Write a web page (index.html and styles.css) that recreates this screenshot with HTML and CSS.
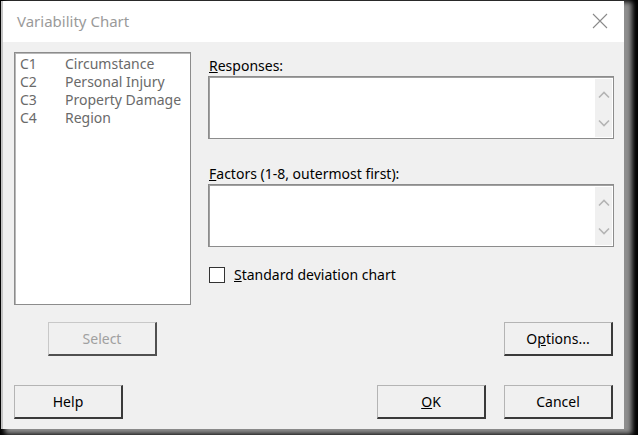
FILE: index.html
```html
<!DOCTYPE html>
<html>
<head>
<meta charset="utf-8">
<link rel="stylesheet" href="styles.css">
</head>
<body>
<div class="window">
  <div class="titlebar">
    <span class="title">Variability Chart</span>
    <svg class="close" width="16" height="16" viewBox="0 0 16 16"><path d="M1 1 L15 15 M15 1 L1 15" stroke="#8a8a8a" stroke-width="1.1" fill="none"/></svg>
  </div>
  <div class="content">
    <div class="main">
      <div class="listbox">
        <div class="item"><span class="col">C1</span><span>Circumstance</span></div>
        <div class="item"><span class="col">C2</span><span>Personal Injury</span></div>
        <div class="item"><span class="col">C3</span><span>Property Damage</span></div>
        <div class="item"><span class="col">C4</span><span>Region</span></div>
      </div>
      <div class="fields">
        <div class="label first"><u>R</u>esponses:</div>
        <div class="textbox">
          <div class="edit"></div>
          <div class="scroll">
            <svg width="12" height="8" viewBox="0 0 12 8"><path d="M1 6.5 L6 1.5 L11 6.5" stroke="#b4b4b4" stroke-width="1.6" fill="none"/></svg>
            <svg width="12" height="8" viewBox="0 0 12 8"><path d="M1 1.5 L6 6.5 L11 1.5" stroke="#b4b4b4" stroke-width="1.6" fill="none"/></svg>
          </div>
        </div>
        <div class="label second"><u>F</u>actors (1-8, outermost first):</div>
        <div class="textbox">
          <div class="edit"></div>
          <div class="scroll">
            <svg width="12" height="8" viewBox="0 0 12 8"><path d="M1 6.5 L6 1.5 L11 6.5" stroke="#b4b4b4" stroke-width="1.6" fill="none"/></svg>
            <svg width="12" height="8" viewBox="0 0 12 8"><path d="M1 1.5 L6 6.5 L11 1.5" stroke="#b4b4b4" stroke-width="1.6" fill="none"/></svg>
          </div>
        </div>
        <div class="check-row">
          <span class="checkbox"></span>
          <span class="check-label"><u>S</u>tandard deviation chart</span>
        </div>
      </div>
    </div>
    <div class="row row-mid">
      <div class="btn disabled select-btn">Select</div>
      <div class="btn">O<u>p</u>tions...</div>
    </div>
    <div class="row row-bottom">
      <div class="btn">Help</div>
      <div class="right-group">
        <div class="btn"><u>O</u>K</div>
        <div class="btn">Cancel</div>
      </div>
    </div>
  </div>
</div>
</body>
</html>
```

FILE: styles.css
```css
html, body {
  margin: 0;
  padding: 0;
  background: #000;
  width: 638px;
  height: 435px;
  overflow: hidden;
}

body {
  font-family: "Noto Sans", "Open Sans", sans-serif;
  font-size: 14px;
  color: #000;
}

.window {
  margin: 1px 0 0 1px;
  width: 621px;
  height: 428px;
  border-left: 2px solid #c4c4c4;
  background: #f0f0f0;
  box-shadow: 6px 3px 5px 2px #8e8e8e;
  display: flex;
  flex-direction: column;
}

.titlebar {
  height: 41px;
  background: #fff;
  display: flex;
  align-items: center;
  justify-content: space-between;
  padding: 0 16px 0 14px;
  flex: none;
}

.title {
  font-size: 15px;
  color: #9a9a9a;
  margin-top: -1px;
}

.close {
  margin-top: -2px;
}

.content {
  padding: 10px 11px 0 11px;
}

.main {
  display: grid;
  grid-template-columns: 177px 406px;
  column-gap: 17px;
  height: 253px;
}

.listbox {
  box-sizing: border-box;
  height: 253px;
  background: #fff;
  border: 1px solid #8c8c8c;
  box-shadow: inset 1px 1px 0 #b8b8b8;
  padding: 2px 0 0 5px;
  color: #6a6a6a;
}

.item {
  display: flex;
  line-height: 18px;
  height: 18px;
}

.col {
  width: 45px;
}

.fields {
  display: flex;
  flex-direction: column;
}

.label {
  line-height: 20px;
  height: 20px;
  padding-left: 1px;
}

.label.first {
  margin-top: 4px;
}

.label.second {
  margin-top: 25px;
}

.textbox {
  box-sizing: border-box;
  height: 63px;
  border: 1px solid #8c8c8c;
  box-shadow: inset 1px 1px 0 #a0a0a0;
  background: #fff;
  display: flex;
  padding: 2px 1px 1px 2px;
}

.edit {
  flex: 1;
}

.scroll {
  width: 17px;
  background: #f0f0f0;
  display: flex;
  flex-direction: column;
  justify-content: space-between;
  align-items: center;
  padding: 12px 0 10px 0;
}

.check-row {
  margin-top: 19px;
  display: flex;
  align-items: center;
  height: 17px;
  padding-left: 1px;
}

.checkbox {
  box-sizing: border-box;
  width: 16px;
  height: 16px;
  border: 1px solid #333;
  background: #fff;
  margin-right: 9px;
}

.check-label {
  line-height: 17px;
}

.row {
  display: flex;
  justify-content: space-between;
}

.row-mid {
  margin-top: 17px;
  padding-left: 34px;
}

.row-bottom {
  margin-top: 29px;
}

.right-group {
  display: flex;
  gap: 18px;
}

.btn {
  box-sizing: border-box;
  width: 109px;
  height: 34px;
  background: #f0f0f0;
  border-top: 1px solid #b4b4b4;
  border-left: 1px solid #b4b4b4;
  border-right: 2px solid #3a3a3a;
  border-bottom: 2px solid #3a3a3a;
  display: flex;
  align-items: center;
  justify-content: center;
  padding-bottom: 1px;
}

.btn.disabled {
  color: #a0a0a0;
  border-top-color: #c8c8c8;
  border-left-color: #c8c8c8;
  border-right-color: #505050;
  border-bottom-color: #505050;
}
```
